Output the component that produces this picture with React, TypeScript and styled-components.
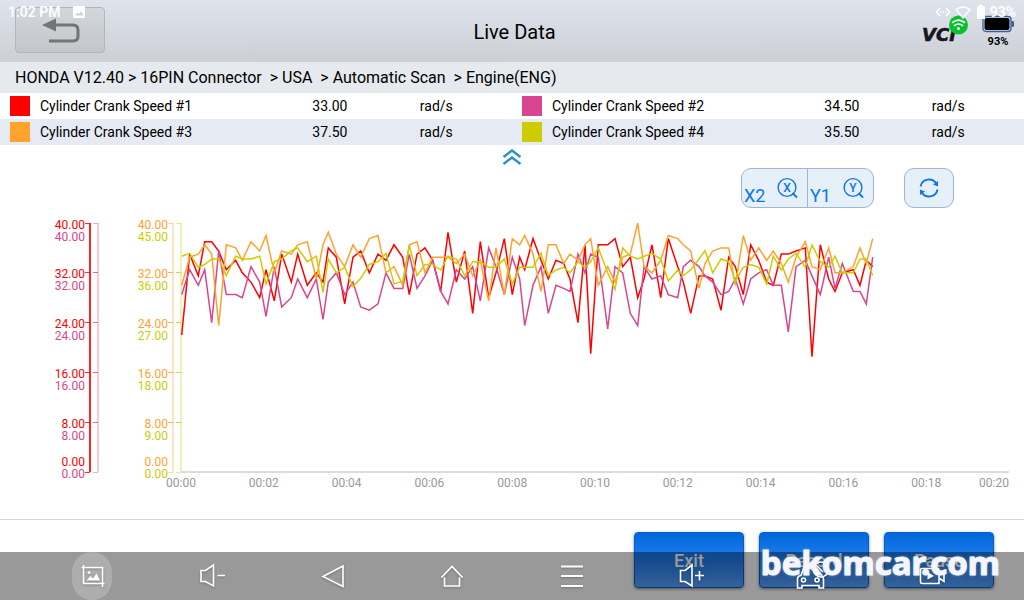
import React from "react";
import styled, { createGlobalStyle } from "styled-components";

const GlobalStyle = createGlobalStyle`
  *, *::before, *::after { box-sizing: border-box; }
  body { margin: 0; background: #fff; color: #000; font-family: Roboto, "Liberation Sans", sans-serif; }
  button { font: inherit; cursor: pointer; }
`;

const Page = styled.main`
  position: relative;
  display: flex;
  flex-direction: column;
  min-height: 100vh;
  overflow: hidden;
`;

const StatusBar = styled.div`
  position: absolute;
  inset: 0 0 auto;
  z-index: 3;
  display: flex;
  align-items: center;
  justify-content: space-between;
  height: 24px;
  padding: 0 8px;
  color: #fff;
  font-size: 14px;
  font-weight: 600;
  pointer-events: none;
`;

const StatusGroup = styled.div<{ $gap: number }>`
  display: flex;
  align-items: center;
  gap: ${(p) => p.$gap}px;
`;

const Header = styled.header`
  display: grid;
  grid-template-columns: 1fr auto 1fr;
  align-items: start;
  height: 62px;
  padding: 7px 10px 0 15px;
  background: linear-gradient(#dfe3ec, #cccfd5);
`;

const Title = styled.h1`
  margin: 0;
  font-size: 20px;
  line-height: 50px;
  font-weight: 400;
`;

const BackButton = styled.button`
  width: 90px;
  height: 46px;
  padding: 0;
  border: 1px solid #b3b6ba;
  border-radius: 4px;
  background: linear-gradient(#d3d7dc, #c3c7ca);
`;

const Devices = styled.div`
  display: flex;
  justify-content: flex-end;
  align-items: flex-start;
  gap: 12px;
  padding-top: 6px;
`;

const Battery = styled.div`
  display: flex;
  flex-direction: column;
  align-items: center;
  gap: 2px;
  width: 32px;
  font-size: 11px;
  line-height: 14px;
  font-weight: 700;
  padding-top: 2px;
`;

const Breadcrumb = styled.nav`
  height: 31px;
  padding: 0 15px;
  background: #e6e9ee;
  font-size: 16px;
  line-height: 31px;
  white-space: pre;
`;

const Legend = styled.table`
  width: 100%;
  border-collapse: collapse;
  table-layout: fixed;
  font-size: 14px;
  line-height: 26px;
  tr:nth-child(even) { background: #e6eaf2; }
  td, th { height: 26px; padding: 0; font-weight: 400; text-align: left; }
`;

const Swatch = styled.span<{ $color: string }>`
  display: block;
  width: 20px;
  height: 20px;
  margin-left: 10px;
  background: ${(p) => p.$color};
`;

const LegendCol = styled.col<{ $share: number }>`
  width: ${(p) => p.$share}%;
`;

const CollapseButton = styled.button`
  align-self: center;
  display: block;
  height: 23px;
  padding: 3px 4px 0;
  border: 0;
  background: none;
`;

const Toolbar = styled.div`
  display: flex;
  justify-content: flex-end;
  gap: 30px;
  padding: 0 70px 0 0;
`;

const ZoomGroup = styled.div`
  display: flex;
  height: 40px;
  border: 1px solid #9cb5d6;
  border-radius: 10px;
  background: #e6f0f9;
  overflow: hidden;
`;

const ZoomButton = styled.button`
  display: flex;
  align-items: flex-end;
  justify-content: space-between;
  width: 65px;
  padding: 0 8px 0 2px;
  border: 0;
  background: none;
  color: #0b75ec;
  font-size: 18px;
  line-height: 22px;
  & + & { width: 66px; border-left: 1px solid #9cb5d6; }
  svg { align-self: flex-start; margin-top: 7px; }
`;

const RefreshButton = styled.button`
  display: grid;
  place-items: center;
  width: 50px;
  height: 40px;
  padding: 0;
  border: 1px solid #9cb5d6;
  border-radius: 10px;
  background: #e6f0f9;
`;

const Chart = styled.svg`
  display: block;
  width: 100%;
  height: auto;
  margin-top: 4px;
  font-size: 12px;
`;

const Footer = styled.footer`
  display: flex;
  justify-content: flex-end;
  gap: 15px;
  flex: 1;
  margin-top: 27px;
  padding: 12px 30px;
  border-top: 1px solid #d6d6d6;
`;

const ActionButton = styled.button`
  width: 110px;
  height: 56px;
  padding: 0;
  border: 1px solid #0060d0;
  border-radius: 4px;
  background: linear-gradient(#0067dc, #2a82f0 60%, #5aa4ff);
  box-shadow: 0 1px 3px rgba(0, 0, 0, 0.5);
  color: #fff;
  font-size: 18px;
  font-weight: 500;
`;

const SystemNav = styled.nav`
  position: absolute;
  inset: auto 0 0;
  z-index: 1;
  display: grid;
  grid-template-columns: repeat(8, 1fr);
  justify-items: center;
  height: 48px;
  padding: 0 32px;
  background: rgba(0, 0, 0, 0.4);
`;

const NavButton = styled.button<{ $lit?: boolean }>`
  display: grid;
  place-items: center;
  width: 40px;
  height: 48px;
  padding: 0;
  border: 0;
  border-radius: 20px;
  background: ${(p) => (p.$lit ? "rgba(255, 255, 255, 0.2)" : "none")};
  svg { filter: drop-shadow(0 1px 1px rgba(0, 0, 0, 0.25)); }
`;

const Watermark = styled.div`
  position: absolute;
  right: 24px;
  bottom: 16px;
  z-index: 2;
  color: #f4f6fb;
  font-family: "Noto Sans", "Open Sans", sans-serif;
  font-size: 33px;
  line-height: 42px;
  font-weight: 700;
  -webkit-text-stroke: 1px #f4f6fb;
  text-shadow: 0 0 3px rgba(255, 255, 255, 0.6);
  pointer-events: none;
`;

const RED = "#ff0000";
const PINK = "#d9468f";
const ORANGE = "#ffa22e";
const OLIVE = "#cccc00";

const LEGEND = [
  [
    { color: RED, name: "Cylinder Crank Speed #1", value: "33.00" },
    { color: PINK, name: "Cylinder Crank Speed #2", value: "34.50" },
  ],
  [
    { color: ORANGE, name: "Cylinder Crank Speed #3", value: "37.50" },
    { color: OLIVE, name: "Cylinder Crank Speed #4", value: "35.50" },
  ],
];

/* Sample times, in thirds of a chart unit from the left of the plot. */
const TIMES = [
  20, 44, 70, 89, 110, 131, 154, 182, 202, 228, 254, 273, 298, 320, 349, 368, 397, 424, 444, 460, 484, 509, 534,
  557, 583, 609, 633, 657, 683, 703, 726, 750, 773, 797, 819, 844, 869, 893, 916, 941, 963, 988, 1012, 1034, 1049,
  1074, 1098, 1120, 1143, 1166, 1185, 1209, 1230, 1247, 1270, 1298, 1320, 1343, 1366, 1388, 1407, 1431, 1457, 1480,
  1508, 1525, 1547, 1572, 1590, 1613, 1638, 1661, 1681, 1705, 1727, 1751, 1775, 1795, 1819, 1840, 1863, 1891, 1911,
  1936, 1961, 1980, 2002, 2035, 2055, 2074, 2093,
];

const SERIES = [
  {
    color: RED,
    max: 40,
    values: [
      22, 35, 31.5, 37, 37, 35.5, 32.5, 34, 32, 30.5, 28, 32.5, 27.5, 35, 30.5, 35, 30, 32, 30.5, 36, 34.5, 27, 34.5,
      35.5, 32, 35, 34, 36.5, 34.5, 28.5, 35, 36, 34, 29, 38.5, 30.5, 35.5, 25.5, 37, 28, 32, 37.5, 28.5, 34.5, 32.5,
      37.5, 34, 31, 34, 33.5, 31, 24, 36.5, 19, 36.5, 36.5, 37.5, 33, 34.5, 28, 31, 36.5, 28, 37.5, 33, 30.5, 25.5,
      31.5, 31.5, 31, 26, 34.5, 33, 28.5, 36.5, 34, 30.5, 30, 35, 35, 35.5, 36, 18.5, 36.5, 31, 29, 32, 32.5, 30, 34,
      33,
    ],
  },
  {
    color: PINK,
    max: 40,
    values: [
      28.5, 32.5, 30, 32.5, 24, 35.5, 28.5, 28.5, 28, 33, 30.5, 25, 33, 26.5, 28, 31, 28, 31, 24.5, 30.5, 32, 28.5,
      30.5, 26.5, 26, 27, 32, 29.5, 29.5, 35, 29.5, 31.5, 34, 29, 27, 32.5, 31, 33, 27.5, 36, 33, 28.5, 34.5, 31,
      23.5, 30, 33, 25.5, 30, 29.5, 29, 35, 32, 35, 34.5, 23, 33, 32, 25.5, 23.5, 33, 31, 31.5, 28.5, 28, 33, 34, 33,
      31.5, 30.5, 28.5, 29, 31, 27, 31, 32, 32.5, 30, 30, 22.5, 33, 34, 31.5, 28.5, 34.5, 29.5, 33.5, 29, 29, 27,
      34.5,
    ],
  },
  {
    color: ORANGE,
    max: 40,
    values: [
      30, 34.5, 35, 36.5, 35, 23.5, 36.5, 36, 34, 37, 35.5, 38, 32, 35.5, 35, 36.5, 37, 31, 36.5, 38.5, 35, 33, 36.5,
      34.5, 37.5, 38, 32, 33, 30, 36.5, 37, 32, 34.5, 34.5, 34.5, 33.5, 35, 31.5, 34, 27.5, 36, 28.5, 37.5, 36.5, 38,
      35, 29, 36.5, 36.5, 33.5, 35, 34, 36.5, 37.5, 30, 33, 30.5, 34.5, 35, 40, 33, 32, 34, 38, 37.5, 36.5, 35.5,
      29.5, 33.5, 35.5, 36, 36, 30, 38, 34, 36, 34, 35.5, 33.5, 30.5, 34.5, 37, 33, 32.5, 36, 32, 32, 33, 36, 33.5,
      37.5,
    ],
  },
  {
    color: OLIVE,
    max: 45,
    values: [
      39, 39.5, 37, 37.5, 38.5, 38.5, 35.5, 39, 38.5, 38.5, 39, 34, 38, 38.5, 40, 40.5, 38, 39, 32.5, 38.5, 36, 37,
      33.5, 35, 37.5, 38, 39.5, 34, 34.5, 41, 35.5, 37.5, 37.5, 36.5, 39, 38.5, 35.5, 38, 38, 37, 37, 38.5, 34, 37,
      37, 37, 39.5, 35.5, 36.5, 37, 36, 38, 37, 38, 40.5, 36, 33, 40.5, 39, 38.5, 39, 39.5, 38.5, 34.5, 36.5, 35.5,
      36.5, 38.5, 40, 36, 38.5, 38, 34.5, 37, 37.5, 37, 34, 39, 36.5, 38.5, 39.5, 37, 41, 38, 37, 39, 36, 36, 38.5,
      38.5, 35.5,
    ],
  },
];

const PLOT_TOP = 11;
const PLOT_BOTTOM = 260;
const PLOT_HEIGHT = PLOT_BOTTOM - PLOT_TOP;

const toPoints = (values: number[], max: number) =>
  values
    .map((v, i) => `${(175 + TIMES[i] / 3).toFixed(1)},${(PLOT_BOTTOM - (v / max) * PLOT_HEIGHT).toFixed(1)}`)
    .join(" ");

const AXES = [
  { color: RED, x: 90, labelX: 85, row: 0, max: 40, opacity: 0.85 },
  { color: PINK, x: 98, labelX: 85, row: 1, max: 40, opacity: 0.28 },
  { color: ORANGE, x: 173, labelX: 168, row: 0, max: 40, opacity: 0.28 },
  { color: OLIVE, x: 181, labelX: 168, row: 1, max: 45, opacity: 0.28 },
];

const STEPS = [0, 1, 2, 3, 4, 5];

function Axis({ color, x, labelX, row, max, opacity }: (typeof AXES)[number]) {
  return (
    <g>
      <path d={`M${x} ${PLOT_TOP}V${PLOT_BOTTOM}`} stroke={color} strokeWidth="2" opacity={opacity} />
      {STEPS.map((s) => {
        const y = Math.floor(PLOT_TOP + (s * PLOT_HEIGHT) / 5);
        const faint = opacity < 0.5 && (s === 0 || s === 5);
        const base = s === 5 ? y - 6 : y + 6;
        return (
          <g key={s}>
            <path d={`M${x - 5} ${y + 0.5}H${x}`} stroke={color} opacity={faint ? 0.4 : 0.8} />
            <text x={labelX} y={base + row * 12} fill={color} textAnchor="end">
              {(max - (max * s) / 5).toFixed(2)}
            </text>
          </g>
        );
      })}
    </g>
  );
}

function LiveChart() {
  return (
    <Chart viewBox="0 0 1024 280" role="img" aria-label="Cylinder crank speed over time">
      <path d={`M181 ${PLOT_BOTTOM}H1009`} stroke="#dcdcdc" strokeWidth="2" />
      {AXES.map((a) => (
        <Axis key={a.x} {...a} />
      ))}
      {STEPS.concat(6, 7, 8, 9, 10).map((s) => (
        <text
          key={s}
          x={s === 10 ? 1009 : 181 + s * 82.8}
          y="275"
          fill="#999"
          textAnchor={s === 10 ? "end" : "middle"}
        >
          {`00:${String(s * 2).padStart(2, "0")}`}
        </text>
      ))}
      {SERIES.map((s) => (
        <polyline key={s.color} points={toPoints(s.values, s.max)} fill="none" stroke={s.color} strokeWidth="1.5" />
      ))}
    </Chart>
  );
}

function BackIcon() {
  return (
    <svg width="88" height="44" viewBox="0 0 88 44" fill="none">
      <path d="M39 17H57Q62 17 62 22V28Q62 33 57 33H33" stroke="#747474" strokeWidth="3" />
      <path d="M26 17L40 10.500V23.500Z" fill="#747474" />
    </svg>
  );
}

function VciLogo() {
  return (
    <svg width="48" height="32" viewBox="0 0 48 32">
      <text
        x="0"
        y="28"
        fill="#17181b"
        stroke="#17181b"
        strokeWidth="0.6"
        fontFamily="DejaVu Sans"
        fontWeight="700"
        fontStyle="italic"
        fontSize="18"
      >
        VCI
      </text>
      <circle cx="36.500" cy="12" r="9.500" fill="#08c22f" />
      <g fill="none" stroke="#fff" strokeWidth="1.600" strokeLinecap="round">
        <path d="M30.500 9.500Q36.500 4.800 42.500 9.500" />
        <path d="M32.500 12.500Q36.500 9.500 40.500 12.500" />
      </g>
      <circle cx="36.500" cy="15.500" r="1.500" fill="#fff" />
    </svg>
  );
}

function ZoomIcon({ letter }: { letter: string }) {
  return (
    <svg width="22" height="24" viewBox="0 0 22 24" fill="none" stroke="#0b75ec">
      <circle cx="10" cy="11.500" r="8.900" strokeWidth="1.400" />
      <path d="M15.500 17L20 21.500" strokeWidth="1.800" />
      <text x="10" y="16" textAnchor="middle" fontSize="12" fontWeight="500" fill="#0b75ec" stroke="none">
        {letter}
      </text>
    </svg>
  );
}

const NAV_ITEMS: { label: string; lit?: boolean; icon: React.ReactNode }[] = [
  {
    label: "Screenshot",
    lit: true,
    icon: (
      <>
        <path d="M11.500 6V24.500H32.500M9.500 8.500H30.500V28" />
        <path d="M14.500 21.500L18.500 17L21 19.500L24.500 14.500L28 21.500Z" fill="#fff" stroke="none" />
        <circle cx="17" cy="13.500" r="1.500" fill="#fff" stroke="none" />
      </>
    ),
  },
  { label: "Volume down", icon: <path d="M9 11.500H13.500L21.500 6V27L13.500 22.500H9ZM25.500 16.500H33" /> },
  { label: "Back", icon: <path d="M31 7L11 17.500L31 27.500Z" /> },
  { label: "Home", icon: <path d="M9.500 18.500L20 7.500L30.500 18.500M12.500 18.500V27H27.500V18.500" /> },
  { label: "Menu", icon: <path d="M9 7.500H31M9 17H31M9 27H31" strokeWidth="2.200" /> },
  { label: "Volume up", icon: <path d="M8.500 11.500H13L20 6V27L13 22.500H8.500ZM23 16.500H32M27.500 12V21.500" /> },
  {
    label: "Vehicle",
    icon: (
      <>
        <path d="M22 8H12L9 16.500Q5.500 17 5.500 20V29H10V26.500H27V29H31.500V20Q31.500 18 29 16.500" />
        <circle cx="11.500" cy="21" r="2" />
        <circle cx="25" cy="21" r="2" />
        <circle cx="29" cy="10.500" r="7.500" />
        <path d="M24 6L31 13" />
      </>
    ),
  },
  {
    label: "Screen recorder",
    icon: (
      <>
        <path d="M10 9.500H25.500Q27 9.500 27 11V24.500H10Q8.500 24.500 8.500 23V11Q8.500 9.500 10 9.500ZM27 15L32 11.500V22.500L27 19" />
        <path d="M15.500 13L22 17L15.500 20.500Z" fill="#fff" stroke="none" />
      </>
    ),
  },
];

export default function App() {
  return (
    <>
      <GlobalStyle />
      <Page>
        <StatusBar>
          <StatusGroup $gap={12}>
            <span>1:02 PM</span>
            <svg width="12" height="12" viewBox="0 0 12 12">
              <rect width="12" height="12" rx="1" fill="#fff" />
              <path d="M2 9.500L4.500 6.500L6 8L8 5L10.500 9.500Z" fill="#cfd3d9" />
            </svg>
          </StatusGroup>
          <StatusGroup $gap={4}>
            <svg width="16" height="12" viewBox="0 0 16 12" fill="none" stroke="#fff" strokeWidth="1.500">
              <path d="M5 2L1.500 6L5 10M11 2L14.500 6L11 10" />
              <path d="M5 6H11" strokeDasharray="1.500 1" />
            </svg>
            <svg width="16" height="13" viewBox="0 0 16 13" fill="none" stroke="#fff" strokeWidth="1.500">
              <path d="M1 3.500Q8 -1.500 15 3.500L8 12Z" />
            </svg>
            <svg width="11" height="14" viewBox="0 0 11 14">
              <path d="M4 0H8V1.500H10V14H2V1.500H4Z" fill="#fff" />
            </svg>
            <span>93%</span>
          </StatusGroup>
        </StatusBar>

        <Header>
          <BackButton aria-label="Back">
            <BackIcon />
          </BackButton>
          <Title>Live Data</Title>
          <Devices>
            <VciLogo />
            <Battery>
              <svg width="32" height="18" viewBox="0 0 32 18">
                <rect x="1" y="1.500" width="28" height="15" rx="3" fill="#d7dde8" stroke="#39609b" strokeWidth="1.300" />
                <rect x="29.500" y="6" width="2.500" height="6" rx="1" fill="#39609b" />
                <rect x="2.500" y="3" width="25" height="12" rx="2" fill="#000" />
              </svg>
              93%
            </Battery>
          </Devices>
        </Header>

        <Breadcrumb aria-label="Path">{"HONDA V12.40 > 16PIN Connector  > USA  > Automatic Scan  > Engine(ENG)"}</Breadcrumb>

        <Legend>
          <colgroup>
            {[0, 1].map((i) => (
              <React.Fragment key={i}>
                <LegendCol $share={3.9} />
                <LegendCol $share={26.6} />
                <LegendCol $share={10.5} />
                <LegendCol $share={9} />
              </React.Fragment>
            ))}
          </colgroup>
          <tbody>
            {LEGEND.map((row) => (
              <tr key={row[0].name}>
                {row.map((item) => (
                  <React.Fragment key={item.name}>
                    <td>
                      <Swatch $color={item.color} />
                    </td>
                    <th scope="row">{item.name}</th>
                    <td>{item.value}</td>
                    <td>rad/s</td>
                  </React.Fragment>
                ))}
              </tr>
            ))}
          </tbody>
        </Legend>

        <CollapseButton aria-label="Collapse legend">
          <svg width="20" height="18" viewBox="0 0 20 18" fill="none" stroke="#2593cc" strokeWidth="2.400">
            <path d="M1.500 9L10 2.500L18.500 9M1.500 16L10 9.500L18.500 16" />
          </svg>
        </CollapseButton>

        <Toolbar>
          <ZoomGroup>
            <ZoomButton>
              X2
              <ZoomIcon letter="X" />
            </ZoomButton>
            <ZoomButton>
              Y1
              <ZoomIcon letter="Y" />
            </ZoomButton>
          </ZoomGroup>
          <RefreshButton aria-label="Refresh">
            <svg width="20" height="20" viewBox="0 0 20 20" fill="none" stroke="#0b75ec" strokeWidth="1.800">
              <path d="M1.500 8.500A8.600 8.600 0 0 1 17.500 6M18.500 11.500A8.600 8.600 0 0 1 2.500 14" />
              <path d="M19 3V8.500L14 6.500ZM1 17V11.500L6 13.500Z" fill="#0b75ec" stroke="none" />
            </svg>
          </RefreshButton>
        </Toolbar>

        <LiveChart />

        <Footer>
          <ActionButton>Exit</ActionButton>
          <ActionButton>Record</ActionButton>
          <ActionButton>Pause</ActionButton>
        </Footer>

        <SystemNav aria-label="System">
          {NAV_ITEMS.map((item) => (
            <NavButton key={item.label} aria-label={item.label} $lit={item.lit}>
              <svg width="40" height="34" viewBox="0 0 40 34" fill="none" stroke="#fff" strokeWidth="1.600">
                {item.icon}
              </svg>
            </NavButton>
          ))}
        </SystemNav>
        <Watermark>bekomcar.com</Watermark>
      </Page>
    </>
  );
}
